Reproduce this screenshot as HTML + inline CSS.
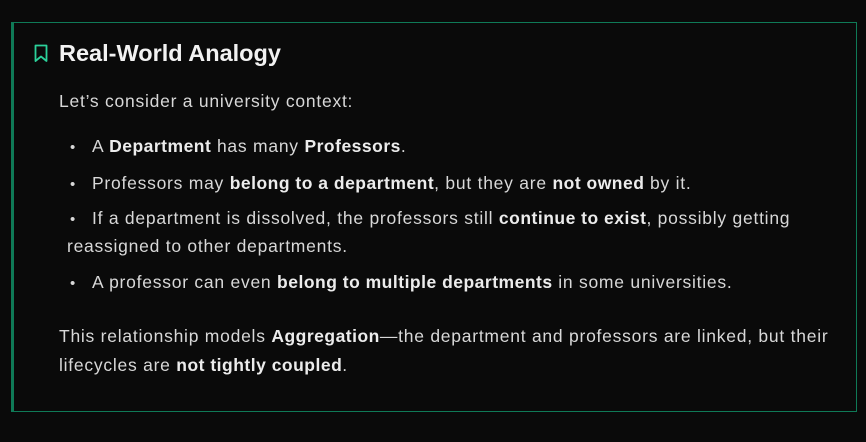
<!DOCTYPE html>
<html><head><meta charset="utf-8"><style>
html,body{margin:0;padding:0;background:#0a0a0a;width:866px;height:442px;overflow:hidden}
body{font-family:"Liberation Sans",sans-serif;color:#d8d8d8;font-size:17.5px;letter-spacing:0.75px}
.box{position:absolute;left:11px;top:22px;width:842px;height:388px;border:1px solid #0f7a57;border-left:3px solid #0f7a57;box-sizing:content-box}
h2{position:absolute;left:45px;top:17px;margin:0;font-size:23.5px;font-weight:bold;color:#f2f2f2;letter-spacing:0}
svg{position:absolute;left:19px;top:21px}
p,.li{position:absolute;margin:0;line-height:27px;white-space:nowrap}
b{color:#ececec;letter-spacing:0.5px}
.li .d{display:inline-block;width:25px;padding-left:3px;box-sizing:border-box;font-size:15px}
</style></head><body>
<div class="box">
<svg width="16" height="19" viewBox="0 0 16 19"><path d="M2.5 1.5h11v15.5l-5.5-4.5-5.5 4.5z" fill="none" stroke="#2bd19a" stroke-width="1.8" stroke-linejoin="round"/></svg>
<h2>Real-World Analogy</h2>
<p style="left:45px;top:65px">Let’s consider a university context:</p>
<div class="li" style="left:53px;top:110px"><span class="d">•</span>A <b>Department</b> has many <b>Professors</b>.</div>
<div class="li" style="left:53px;top:147px"><span class="d">•</span>Professors may <b>belong to a department</b>, but they are <b>not owned</b> by it.</div>
<div class="li" style="left:53px;top:182px"><span class="d">•</span>If a department is dissolved, the professors still <b>continue to exist</b>, possibly getting<br>reassigned to other departments.</div>
<div class="li" style="left:53px;top:246px"><span class="d">•</span>A professor can even <b>belong to multiple departments</b> in some universities.</div>
<p style="left:45px;top:299px;line-height:29px">This relationship models <b>Aggregation</b>—the department and professors are linked, but their<br>lifecycles are <b>not tightly coupled</b>.</p>
</div>
</body></html>
